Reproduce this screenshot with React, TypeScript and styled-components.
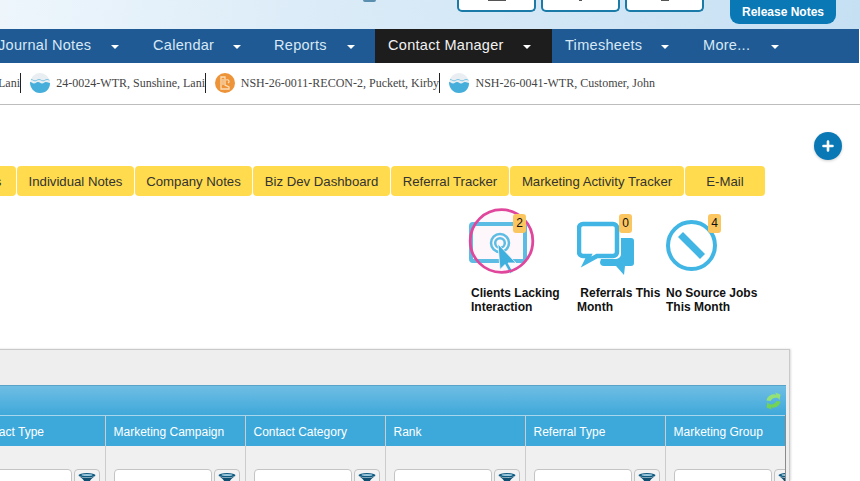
import React from "react";
import styled, { createGlobalStyle } from "styled-components";

const Global = createGlobalStyle`
  html, body { margin: 0; padding: 0; background: #fff; }
  body { width: 860px; height: 481px; overflow: hidden; font-family: "Liberation Sans", Arial, sans-serif; }
`;
const Page = styled.div`width: 860px; height: 481px; overflow: hidden; display: flex; flex-direction: column;`;
const TopBand = styled.header`
  height: 29px; flex: none; display: flex; align-items: flex-start; padding-left: 457px; box-sizing: border-box;
  background: linear-gradient(100deg, #eef6fc 0%, #dcecf8 35%, #c6e0f3 100%);
`;
const TopButton = styled.div<{ $tick: number }>`
  width: 79px; height: 12px; margin-right: 5px; box-sizing: border-box; background: #fff; display: flex; justify-content: center;
  border: 2px solid #1a7ba8; border-top: 0; border-radius: 0 0 5px 5px;
  &::before { content: ""; width: ${(p) => p.$tick}px; height: 1px; background: #555; }
`;
const ReleaseNotes = styled.div`
  width: 106px; height: 24px; margin-left: 21px; background: #0a78b5; color: #fff; font-size: 12px; font-weight: 700;
  border-radius: 0 0 9px 9px; display: flex; align-items: center; justify-content: center;
`;
const Dot = styled.div`
  width: 13px; height: 2px; margin-left: -94px; margin-right: 81px; background: #5a8fb0; border-radius: 0 0 7px 7px;
`;
const NavBar = styled.nav`
  height: 34px; width: 861px; margin-left: -2px; flex: none; background: #1f5a94; display: flex; font-size: 14.5px; letter-spacing: 0.3px;
`;
const NavItem = styled.div<{ $w: number; $active?: boolean; $pl: number; $gap: number }>`
  width: ${(p) => p.$w}px; padding-left: ${(p) => p.$pl}px; box-sizing: border-box; display: flex; align-items: center; flex: none;
  gap: ${(p) => p.$gap}px; white-space: nowrap; padding-bottom: 2px;
  background: ${(p) => (p.$active ? "#1d1d1d" : "transparent")};
  color: ${(p) => (p.$active ? "#f2f2f2" : "#d8e8f5")};
`;
const Caret = styled.span`
  width: 0; height: 0; margin-top: 4px; border-left: 4.5px solid transparent; border-right: 4.5px solid transparent; border-top: 4px solid #fff;
`;
const CaseBar = styled.div`
  height: 42px; flex: none; box-sizing: border-box; border-bottom: 1px solid #bdbdbd; display: flex; align-items: center;
  font-family: "Liberation Serif", "Times New Roman", serif; font-size: 12px; color: #444; white-space: nowrap;
  padding-bottom: 1px;
`;
const CaseTab = styled.div<{ $w: number; $divider?: boolean }>`
  width: ${(p) => p.$w}px; flex: none; height: 20px; box-sizing: border-box; display: flex; align-items: center; gap: 6px;
  justify-content: flex-end; border-right: ${(p) => (p.$divider ? "1px solid #222" : "0")}; overflow: hidden;
`;
const Body = styled.main`flex: 1; display: flex; flex-direction: column; position: relative; min-height: 0;`;
const PlusButton = styled.div`
  position: absolute; left: 814px; top: 27px; width: 28px; height: 28px; border-radius: 50%; background: #0a78b5;
  box-shadow: 0 1px 3px rgba(0,0,0,.2); color: #fff; display: flex; align-items: center; justify-content: center;
`;
const Tabs = styled.div`display: flex; gap: 1px; margin: 61px 0 0 -97px; height: 30px; flex: none;`;
const Tab = styled.div<{ $w: number }>`
  width: ${(p) => p.$w}px; flex: none; background: #ffdb4d; border-radius: 4px; color: #333; font-size: 13.200px;
  display: flex; align-items: center; justify-content: center; white-space: nowrap;
`;
const Stats = styled.div`display: flex; margin: 15px 0 0 471px; height: 138px; flex: none;`;
const Stat = styled.div<{ $w: number }>`width: ${(p) => p.$w}px; flex: none; display: flex; flex-direction: column;`;
const IconBox = styled.div`position: relative; height: 71px;`;
const Badge = styled.span<{ $left: number }>`
  position: absolute; left: ${(p) => p.$left}px; top: 3px; width: 13px; height: 19px; background: #fbc65f; border-radius: 3px;
  font-size: 12px; color: #111; text-align: center; line-height: 18px;
`;
const StatLabel = styled.div`font-size: 12px; font-weight: 700; color: #111; line-height: 14px; white-space: pre-line; margin-top: 4px;`;
const Panel = styled.section`
  margin: 0 0 0 -2px; width: 792px; flex: 1; box-sizing: border-box; background: #eee; border: 1px solid #c9c9c9; border-bottom: 0;
  box-shadow: 1px 0 2px rgba(0,0,0,.15); padding-top: 35px; display: flex; flex-direction: column; overflow: hidden;
`;
const GridTop = styled.div`
  width: 787px; height: 30px; flex: none; box-sizing: border-box; display: flex; justify-content: flex-end; align-items: center; padding-right: 4px;
  background: linear-gradient(#6fbee4, #3fa8d9); border-top: 1px solid #5aa3c8;
`;
const Columns = styled.div`display: flex; width: 787px; margin-left: -33px; flex: none; overflow: visible;`;
const Column = styled.div<{ $w: number; $last?: boolean }>`
  width: ${(p) => p.$w}px; flex: none; box-sizing: border-box; border-right: 1px solid ${(p) => (p.$last ? "#8a8a8a" : "#ccc")}; overflow: hidden; background: #f0f0f0;
`;
const HeadCell = styled.div`
  height: 31px; margin-right: -1px; background: #3da9da; border-top: 1px solid #a8d6ec; border-right: 1px solid #a8d6ec; box-sizing: border-box;
  color: #fff; font-size: 12px; display: flex; align-items: center; padding: 2px 0 0 7.500px; white-space: nowrap;
`;
const FilterRow = styled.div`display: flex; gap: 2px; padding: 23px 0 0 8px;`;
const FilterInput = styled.div`
  width: 98px; height: 30px; flex: none; box-sizing: border-box; background: #fff; border: 1px solid #c4c4c4; border-radius: 4px;
`;
const FilterButton = styled.div`
  width: 26px; height: 30px; flex: none; box-sizing: border-box; background: #f3f3f3; border: 1px solid #c4c4c4; border-radius: 4px;
  display: flex; justify-content: center; padding-top: 3px;
`;

const Wave = () => (
  <svg width="20" height="20" viewBox="0 0 20 20" style={{ flex: "none" }}>
    <circle cx="10" cy="10" r="10" fill="#e8eef1" />
    <path d="M0 9c2 0 2 1.500 4 1.500S6 9 8 9s2 1.500 4 1.500S14 9 16 9s2 1 4 1c0 6-4 10-10 10S0 15 0 9Z" fill="#45aedb" />
    <path d="M1 6.500c2 0 2 1.300 4 1.300s2-1.300 4-1.300 2 1.300 4 1.300 2-1.300 4-1.300 1.500.6 2.500.8" fill="none" stroke="#7cc6e6" strokeWidth="1" />
  </svg>
);
const Recon = () => (
  <svg width="20" height="20" viewBox="0 0 20 20" style={{ flex: "none" }}>
    <circle cx="10" cy="10" r="10" fill="#ee9438" />
    <path d="M6 4h4v8l4 2v2H6Z" fill="none" stroke="#fbdcb8" strokeWidth="1.300" />
    <path d="M8 6v6M11 7c3-1 4 2 2 3" fill="none" stroke="#fbdcb8" strokeWidth="1.200" />
  </svg>
);
const Funnel = () => (
  <svg width="18" height="11" viewBox="0 0 18 11">
    <ellipse cx="9" cy="2.200" rx="8.500" ry="2.200" fill="#0f5a80" />
    <ellipse cx="9" cy="2" rx="5.500" ry="1" fill="#9cc8dc" />
    <path d="M0.500 3C4 5 6.500 7.500 7.500 11h3c1-3.500 3.500-6 7-8C13 5.500 5 5.500 .5 3Z" fill="#0f4f72" />
  </svg>
);
const Touch = () => (
  <svg width="68" height="68" viewBox="0 0 68 68" style={{ position: "absolute", left: -4, top: -4 }}>
    <circle cx="34.500" cy="34" r="31.300" fill="#fdf8fc" />
    <path d="M6 17h50a2 2 0 0 1 2 2v33a2 2 0 0 1-2 2H6a2 2 0 0 1-2-2V19a2 2 0 0 1 2-2Z" fill="#fdf7fb" stroke="#5cbce3" strokeWidth="4" />
    <circle cx="33" cy="36" r="9" fill="none" stroke="#5cbce3" strokeWidth="2.500" />
    <circle cx="33" cy="36" r="4.800" fill="none" stroke="#5cbce3" strokeWidth="2.500" />
    <path d="M31 37l18 19-8 0 5 9-3 1.500-5-9-5 5Z" fill="#3fb0dd" stroke="#fdf7fb" strokeWidth=".8" />
    <circle cx="34.500" cy="34" r="31.300" fill="none" stroke="#e0479c" strokeWidth="2.800" />
  </svg>
);
const Chat = () => (
  <svg width="60" height="62" viewBox="0 0 60 62" style={{ position: "absolute", left: 0, top: 10 }}>
    <path d="M6 3h30a4 4 0 0 1 4 4v24a4 4 0 0 1-4 4H20L9 41l3-6H6a4 4 0 0 1-4-4V7a4 4 0 0 1 4-4Z" fill="#fff" stroke="#41b6e4" strokeWidth="4.500" />
    <path d="M44 17h10a3 3 0 0 1 3 3v22a3 3 0 0 1-3 3h-6l-1 9-8-9H27a4 4 0 0 1-4-4l1-3h15a5 5 0 0 0 5-5Z" fill="#41b6e4" />
  </svg>
);
const NoEntry = () => (
  <svg width="54" height="54" viewBox="0 0 54 54" style={{ position: "absolute", left: -1, top: 8 }}>
    <circle cx="26.500" cy="26.500" r="23.500" fill="#fff" stroke="#41b6e4" strokeWidth="4" />
    <path d="M15.500 15.500l22 22" stroke="#41b6e4" strokeWidth="7" />
  </svg>
);
const Refresh = () => (
  <svg width="17" height="18" viewBox="0 0 17 18">
    <path d="M1.500 8.500C2.500 3.500 8 1 11.500 3L10 .5l5.500 2-1 5.500-1.500-2C10 5 7 6 5.500 9Z" fill="#94e276" />
    <path d="M15.500 9.500c-1 5-6.500 7.500-10 5.500L7 17.500l-5.500-2 1-5.500L4 12c3 1 6 0 7.500-3Z" fill="#72d452" />
  </svg>
);

const tabs: [string, number][] = [
  ["Contact Notes", 113], ["Individual Notes", 117], ["Company Notes", 117], ["Biz Dev Dashboard", 137],
  ["Referral Tracker", 118], ["Marketing Activity Tracker", 174], ["E-Mail", 80],
];
const cols: [string, number][] = [
  ["Contact Type", 140], ["Marketing Campaign", 140], ["Contact Category", 140], ["Rank", 140],
  ["Referral Type", 140], ["Marketing Group", 120],
];

export default function App() {
  return (
    <Page>
      <Global />
      <TopBand>
        <Dot />
        <TopButton $tick={18} /><TopButton $tick={3} /><TopButton $tick={8} />
        <ReleaseNotes>Release Notes</ReleaseNotes>
      </TopBand>
      <NavBar>
        <NavItem $w={142} $pl={0} $gap={20}>Journal Notes<Caret /></NavItem>
        <NavItem $w={122} $pl={13} $gap={19}>Calendar<Caret /></NavItem>
        <NavItem $w={113} $pl={12} $gap={20}>Reports<Caret /></NavItem>
        <NavItem $w={177} $active $pl={13} $gap={19}>Contact Manager<Caret /></NavItem>
        <NavItem $w={138} $pl={13} $gap={19}>Timesheets<Caret /></NavItem>
        <NavItem $w={100} $pl={13} $gap={21}>More...<Caret /></NavItem>
      </NavBar>
      <CaseBar>
        <CaseTab $w={21} $divider>Lani</CaseTab>
        <CaseTab $w={185} $divider><Wave />24-0024-WTR, Sunshine, Lani</CaseTab>
        <CaseTab $w={234} $divider><Recon />NSH-26-0011-RECON-2, Puckett, Kirby</CaseTab>
        <CaseTab $w={215}><Wave />NSH-26-0041-WTR, Customer, John</CaseTab>
      </CaseBar>
      <Body>
        <PlusButton>
          <svg width="12" height="12" viewBox="0 0 12 12"><path d="M6 1.500v9M1.500 6h9" stroke="#fff" strokeWidth="2.600" strokeLinecap="round" /></svg>
        </PlusButton>
        <Tabs>
          {tabs.map(([t, w]) => <Tab key={t} $w={w}>{t}</Tab>)}
        </Tabs>
        <Stats>
          <Stat $w={106}>
            <IconBox><Touch /><Badge $left={42}>2</Badge></IconBox>
            <StatLabel>{"Clients Lacking\nInteraction"}</StatLabel>
          </Stat>
          <Stat $w={89}>
            <IconBox><Chat /><Badge $left={42}>0</Badge></IconBox>
            <StatLabel>{"\u00a0Referrals This\nMonth"}</StatLabel>
          </Stat>
          <Stat $w={100}>
            <IconBox><NoEntry /><Badge $left={42}>4</Badge></IconBox>
            <StatLabel>{"No Source Jobs\nThis Month"}</StatLabel>
          </Stat>
        </Stats>
        <Panel>
          <GridTop><Refresh /></GridTop>
          <Columns>
            {cols.map(([t, w], i) => (
              <Column key={t} $w={w} $last={i === cols.length - 1}>
                <HeadCell>{t}</HeadCell>
                <FilterRow><FilterInput /><FilterButton><Funnel /></FilterButton></FilterRow>
              </Column>
            ))}
          </Columns>
        </Panel>
      </Body>
    </Page>
  );
}
